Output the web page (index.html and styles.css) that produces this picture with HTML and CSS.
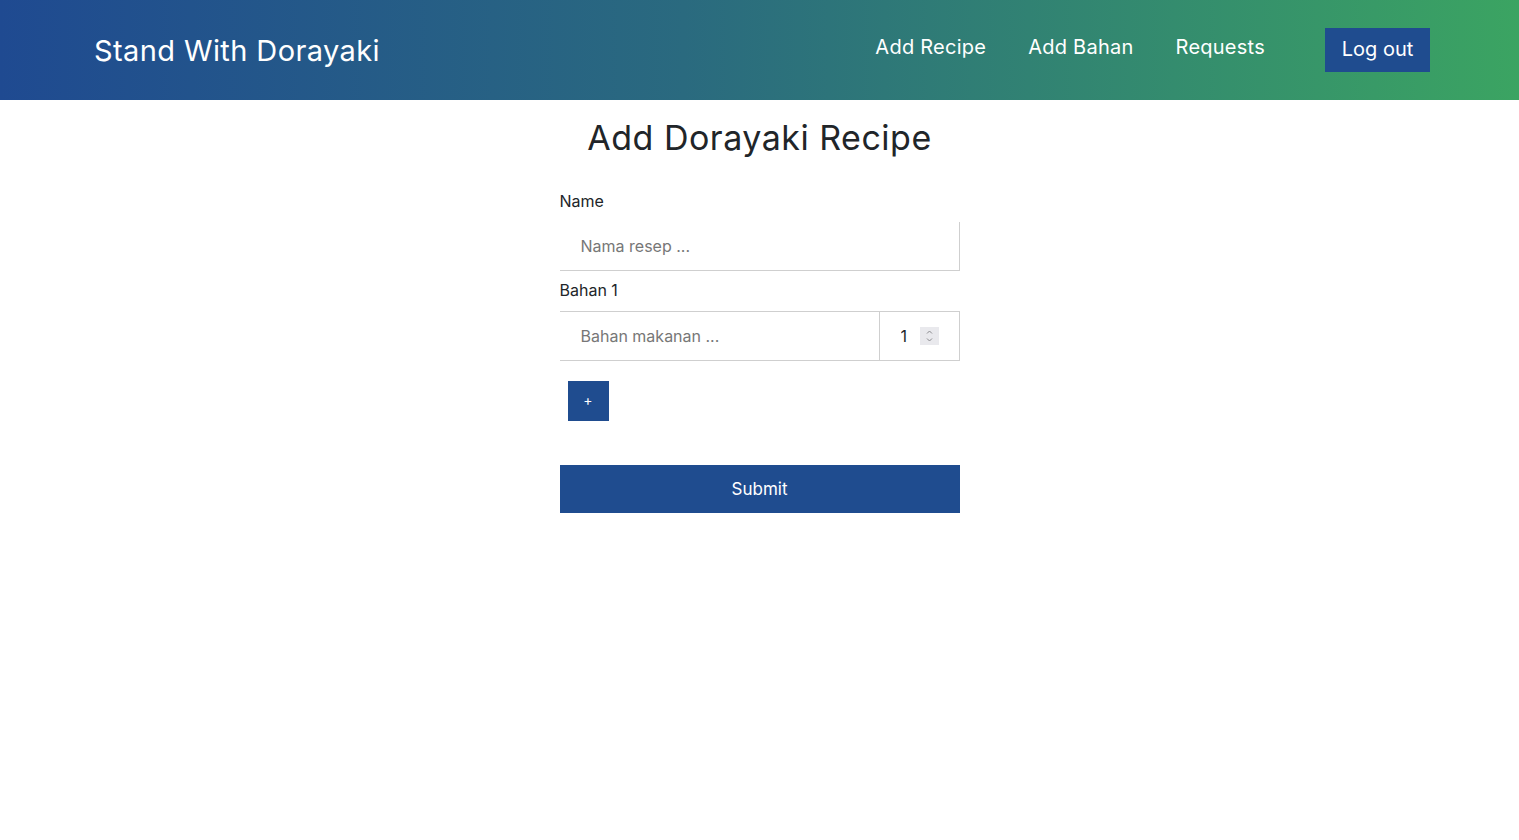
FILE: index.html
```html
<!DOCTYPE html>
<html lang="en">
<head>
<meta charset="utf-8">
<title>Add Dorayaki Recipe</title>
<link rel="stylesheet" href="styles.css">
</head>
<body>
<header class="topbar">
  <div class="brand">Stand With Dorayaki</div>
  <nav class="nav">
    <a class="nav-link" href="#">Add Recipe</a>
    <a class="nav-link" href="#">Add Bahan</a>
    <a class="nav-link" href="#">Requests</a>
    <button class="logout" type="button">Log out</button>
  </nav>
</header>
<main class="main">
  <h1 class="title">Add Dorayaki Recipe</h1>
  <form class="form">
    <label class="label">Name</label>
    <input class="field field-name" type="text" placeholder="Nama resep ...">
    <label class="label">Bahan 1</label>
    <div class="row">
      <input class="field field-bahan" type="text" placeholder="Bahan makanan ...">
      <div class="qty-wrap">
        <input class="field field-qty" type="number" value="1" min="1">
        <span class="spin" aria-hidden="true">
          <svg width="19" height="18" viewBox="0 0 19 18"><path d="M7 6.5 L9.5 4 L12 6.5" fill="none" stroke="#8a8a8e" stroke-width="1"/><path d="M7 11.5 L9.5 14 L12 11.5" fill="none" stroke="#8a8a8e" stroke-width="1"/></svg>
        </span>
      </div>
    </div>
    <button class="add" type="button">+</button>
    <button class="submit" type="button">Submit</button>
  </form>
</main>
</body>
</html>
```
FILE: styles.css
```css
* { box-sizing: border-box; }
body {
  margin: 0;
  font-family: "Inter", "Noto Sans", sans-serif;
  color: #212529;
  background: #fff;
}
.topbar {
  height: 100px;
  background: linear-gradient(90deg, #1f4a91 0%, #2a6a7f 45%, #3ba462 100%);
  display: flex;
  align-items: center;
  justify-content: space-between;
  padding: 0 89px 0 94px;
}
.brand {
  color: #fff;
  font-size: 29px;
  font-weight: 400;
  letter-spacing: 0.4px;
}
.nav {
  display: flex;
  align-items: center;
}
.nav-link {
  color: #fff;
  text-decoration: none;
  font-size: 20px;
  letter-spacing: 0.25px;
  margin-right: 42px;
  margin-top: -6px;
}
.nav-link:nth-child(3) { margin-right: 60px; }
.logout {
  background: #1f4c8f;
  color: #fff;
  border: none;
  font-family: inherit;
  font-size: 20px;
  width: 105px;
  height: 44px;
  padding: 0 0 2px;
}
.main {
  display: flex;
  flex-direction: column;
  align-items: center;
}
.title {
  font-size: 34px;
  font-weight: 400;
  letter-spacing: 0.5px;
  margin: 17px 0 0;
  line-height: 42px;
  color: #212529;
}
.form {
  width: 400px;
  display: flex;
  flex-direction: column;
  margin-top: 32px;
}
.label {
  font-size: 16px;
  line-height: 20px;
  color: #212529;
  margin-bottom: 11px;
}
.field {
  font-family: inherit;
  font-size: 16px;
  color: #212529;
  border: 1px solid #cfcfcf;
  border-radius: 0;
  outline: none;
  background: #fff;
}
.field::placeholder { color: #777; }
.field-name {
  height: 49px;
  border-top: none;
  border-left: none;
  padding: 0 21px;
  margin-bottom: 9px;
}
.row {
  display: flex;
  height: 50px;
}
.field-bahan {
  width: 319px;
  border-left: none;
  border-right: none;
  padding: 0 21px;
}
.qty-wrap {
  position: relative;
  width: 81px;
  display: flex;
}
.field-qty {
  width: 100%;
  padding: 0 14px 0 21px;
  -moz-appearance: textfield;
}
.field-qty::-webkit-inner-spin-button,
.field-qty::-webkit-outer-spin-button {
  -webkit-appearance: none;
  margin: 0;
}
.spin {
  position: absolute;
  left: 41px;
  top: 16px;
  width: 19px;
  height: 18px;
  background: #e9e9ed;
  display: flex;
  pointer-events: none;
}
.add {
  align-self: flex-start;
  margin: 20px 0 0 8px;
  width: 41px;
  height: 40px;
  background: #1f4c8f;
  color: #fff;
  border: none;
  font-family: inherit;
  font-size: 14px;
  padding: 0 0 4px;
}
.submit {
  margin-top: 44px;
  height: 48px;
  background: #1f4c8f;
  color: #fff;
  border: none;
  font-family: inherit;
  font-size: 17px;
}
```
